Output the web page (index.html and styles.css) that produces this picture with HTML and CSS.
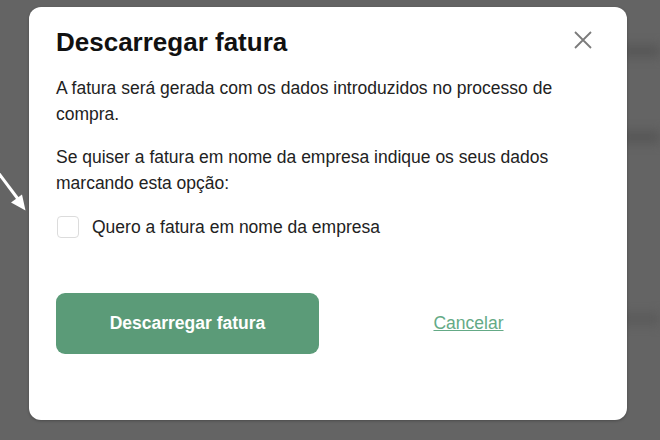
FILE: index.html
```html
<!DOCTYPE html>
<html lang="pt">
<head>
<meta charset="utf-8">
<link rel="stylesheet" href="styles.css">
</head>
<body>
<div class="backdrop">
  <div class="band band1"></div>
  <div class="band band2"></div>
  <div class="band band3"></div>
  <svg class="arrow" width="40" height="60" viewBox="0 160 40 60">
    <path d="M-3 171 L18 199" stroke="#fff" stroke-width="3" fill="none"/>
    <path d="M25.5 210.5 L22 194.5 L11 202.5 Z" fill="#fff"/>
  </svg>
  <div class="modal">
    <div class="modal-head">
      <h2 class="title">Descarregar fatura</h2>
      <button class="close" aria-label="Fechar">
        <svg width="18" height="18" viewBox="0 0 18 18"><path d="M1 1 L17 17 M17 1 L1 17" stroke="#7b7b7b" stroke-width="1.8" fill="none"/></svg>
      </button>
    </div>
    <p class="text">A fatura será gerada com os dados introduzidos no processo de compra.</p>
    <p class="text">Se quiser a fatura em nome da empresa indique os seus dados marcando esta opção:</p>
    <label class="check"><span class="box"></span>Quero a fatura em nome da empresa</label>
    <div class="actions">
      <button class="primary">Descarregar fatura</button>
      <a class="cancel" href="#">Cancelar</a>
    </div>
  </div>
</div>
</body>
</html>
```
FILE: styles.css
```css
* { box-sizing: border-box; }
html, body { margin: 0; padding: 0; }
body { width: 660px; height: 440px; overflow: hidden; font-family: "Liberation Sans", Arial, sans-serif; }
.backdrop { position: relative; width: 660px; height: 440px; background: #646464; padding: 7px 0 0 29px; }
.band { position: absolute; right: 0; width: 40px; height: 14px; background: #585858; filter: blur(5px); }
.band1 { top: 44px; }
.band2 { top: 130px; }
.band3 { top: 312px; background: #5c5c5c; }
.arrow { position: absolute; left: 0; top: 160px; }
.modal { position: relative; width: 598px; height: 413px; background: #fff; border-radius: 12px; padding: 20px 27px 0 27px; box-shadow: 0 1px 3px rgba(0,0,0,0.25); }
.modal-head { display: flex; justify-content: space-between; align-items: flex-start; }
.title { margin: 0; font-size: 26px; font-weight: bold; color: #111; line-height: 30px; }
.close { border: 0; background: none; padding: 0; margin: 4px 8px 0 0; width: 18px; height: 18px; cursor: pointer; }
.close svg { display: block; }
.text { margin: 18px 0 0; font-size: 17.5px; line-height: 26px; color: #222; }
.text + .text { margin-top: 17px; }
.check { display: flex; align-items: center; margin-top: 18px; font-size: 17.5px; line-height: 26px; color: #222; gap: 13px; }
.box { width: 22px; height: 22px; border: 1px solid #dcdcdc; border-radius: 4px; margin-left: 1px; }
.actions { display: flex; align-items: center; margin-top: 53px; gap: 18px; }
.primary { width: 263px; height: 61px; border: 0; border-radius: 9px; background: #5b9b78; color: #fff; font-family: inherit; font-size: 17.5px; font-weight: bold; }
.cancel { flex: 1; text-align: center; color: #64aa86; font-size: 17.5px; text-decoration: underline; }
```
